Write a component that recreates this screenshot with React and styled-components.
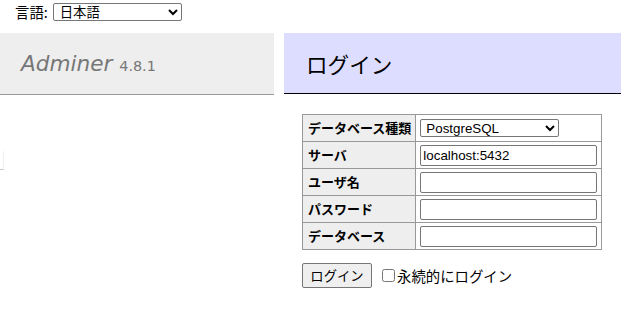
import React from "react";
import styled, { createGlobalStyle } from "styled-components";

const GlobalStyle = createGlobalStyle`
  html, body {
    margin: 0;
    padding: 0;
    background: #fff;
  }
  body {
    font: 14.4px/1.25 "DejaVu Sans", "Noto Sans CJK JP", sans-serif;
    color: #000;
  }
`;

const jp = `"Noto Sans CJK JP", "DejaVu Sans", sans-serif`;

const App = () => {
  return (
    <>
      <GlobalStyle />
      <LangBar>
        <span>言語:</span>
        <LangSelect defaultValue="ja">
          <option value="ja">日本語</option>
          <option value="en">English</option>
        </LangSelect>
      </LangBar>
      <Page>
        <Menu>
          <Brand>
            Adminer <Version>4.8.1</Version>
          </Brand>
          <MenuStub />
        </Menu>
        <Content>
          <Title>ログイン</Title>
          <LoginTable>
            <tbody>
              <tr>
                <Label>データベース種類</Label>
                <Cell>
                  <DriverSelect defaultValue="pgsql">
                    <option value="server">MySQL</option>
                    <option value="sqlite">SQLite 3</option>
                    <option value="pgsql">PostgreSQL</option>
                    <option value="oracle">Oracle (beta)</option>
                  </DriverSelect>
                </Cell>
              </tr>
              <tr>
                <Label>サーバ</Label>
                <Cell>
                  <Field defaultValue="localhost:5432" />
                </Cell>
              </tr>
              <tr>
                <Label>ユーザ名</Label>
                <Cell>
                  <Field />
                </Cell>
              </tr>
              <tr>
                <Label>パスワード</Label>
                <Cell>
                  <Field type="password" />
                </Cell>
              </tr>
              <tr>
                <Label>データベース</Label>
                <Cell>
                  <Field />
                </Cell>
              </tr>
            </tbody>
          </LoginTable>
          <Actions>
            <SubmitButton>ログイン</SubmitButton>
            <Remember>
              <input type="checkbox" />
              永続的にログイン
            </Remember>
          </Actions>
        </Content>
      </Page>
    </>
  );
};

const LangBar = styled.div`
  display: flex;
  align-items: center;
  height: 24px;
  padding: 0 15px;
  font-family: ${jp};
  font-size: 14.4px;
`;

const LangSelect = styled.select`
  box-sizing: border-box;
  width: 129px;
  height: 18px;
  margin: 0 0 0 5px;
  padding: 0 0 0 2px;
  font: 13.33px "Liberation Sans", "Noto Sans CJK JP", sans-serif;
  color: #000;
  background: #fff;
  border: 1px solid #767676;
  border-radius: 2px;
`;

const Page = styled.div`
  display: grid;
  grid-template-columns: 274px 1fr;
  column-gap: 10px;
  margin-top: 9px;
`;

const Menu = styled.div`
  display: flex;
  flex-direction: column;
`;

const Brand = styled.h1`
  margin: 0;
  padding: 17px 21px 17px;
  font: italic normal 21.6px/27px "DejaVu Sans", sans-serif;
  color: #777;
  background: #eee;
  border-bottom: 1px solid #999;
`;

const Version = styled.span`
  font-style: normal;
  font-size: 14.4px;
  line-height: 1;
  color: #777;
`;

const MenuStub = styled.div`
  width: 3px;
  height: 18px;
  margin-top: 56px;
  border-right: 1px solid #f1f1f1;
  border-bottom: 1px solid #c8c8c8;
`;

const Content = styled.div`
  display: flex;
  flex-direction: column;
  align-items: flex-start;
`;

const Title = styled.h2`
  align-self: stretch;
  margin: 0 0 20px;
  padding: 17px 22px 16px;
  font: normal 21.6px/27px ${jp};
  color: #000;
  background: #ddf;
  border-bottom: 1px solid #000;
`;

const LoginTable = styled.table`
  margin-left: 18px;
  border-collapse: collapse;
  border-top: 1px solid #999;
  border-left: 1px solid #999;
  font-family: ${jp};
  font-size: 13px;
`;

const Label = styled.th`
  height: 22px;
  padding: 2px 4px 2px 5px;
  border-right: 1px solid #999;
  border-bottom: 1px solid #999;
  background: #eee;
  text-align: left;
  font-weight: bold;
  line-height: 22px;
  white-space: nowrap;
`;

const Cell = styled.td`
  height: 22px;
  padding: 2px 4px;
  border-right: 1px solid #999;
  border-bottom: 1px solid #999;
  vertical-align: middle;
`;

const DriverSelect = styled.select`
  display: block;
  width: 139px;
  height: 18px;
  padding: 0 0 0 1px;
  font: 13.33px/16px "Liberation Sans", Arial, sans-serif;
  color: #000;
  background: #fff;
  border: 1px solid #767676;
  border-radius: 2px;
`;

const Field = styled.input`
  display: block;
  box-sizing: border-box;
  width: 177px;
  height: 21px;
  padding: 1px 2px;
  font: 13.33px "Liberation Sans", Arial, sans-serif;
  color: #000;
  border: 1px solid #767676;
  border-radius: 2px;
`;

const Actions = styled.div`
  display: flex;
  align-items: center;
  margin: 13px 0 0 18px;
`;

const SubmitButton = styled.button`
  box-sizing: border-box;
  width: 70px;
  height: 25px;
  padding: 0;
  font: 13.33px/1 ${jp};
  color: #000;
  background: #efefef;
  border: 1px solid #767676;
  border-radius: 2px;
`;

const Remember = styled.label`
  display: flex;
  align-items: center;
  margin-left: 7px;
  font-family: ${jp};
  font-size: 14.4px;

  input {
    width: 13px;
    height: 13px;
    margin: 0 2px 0 3px;
  }
`;

export default App;
